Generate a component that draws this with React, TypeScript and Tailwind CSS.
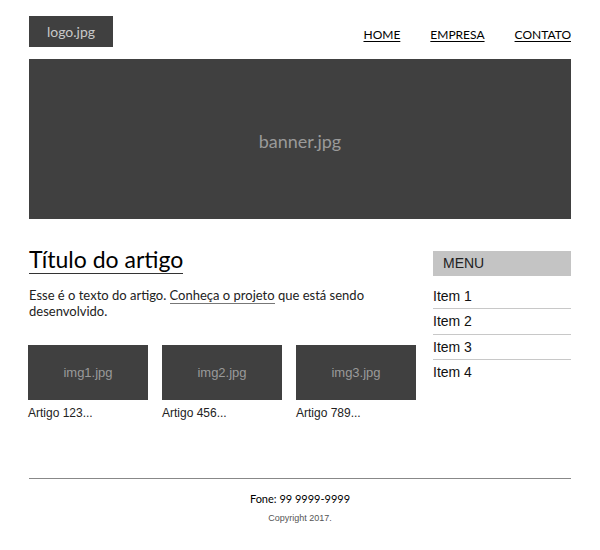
const sans = "font-['Lato','Open_Sans',sans-serif]";
const arial = "font-['Liberation_Sans',Arial,sans-serif]";

function Thumb({ img, label }: { img: string; label: string }) {
  return (
    <div className="w-[120px]">
      <div className={`h-[55px] bg-[#404040] flex items-center justify-center text-[13px] text-[#9a9a9a] ${arial}`}>
        {img}
      </div>
      <p className={`mt-[4px] text-[12px] text-[#222] ${arial}`}>{label}</p>
    </div>
  );
}

export default function App() {
  return (
    <div className="w-[600px] h-[550px] bg-white">
      <div className="w-[542px] ml-[29px] pt-[16px]">
        {/* cabeçalho */}
        <header className="flex items-start justify-between">
          <div className={`w-[84px] h-[31px] bg-[#404040] flex items-center justify-center text-[14px] text-[#c8c8c8] ${sans}`}>
            logo.jpg
          </div>
          <nav className={`flex gap-[30px] pt-[10px] text-[12px] text-black ${sans}`}>
            <a className="underline underline-offset-2">HOME</a>
            <a className="underline underline-offset-2">EMPRESA</a>
            <a className="underline underline-offset-2">CONTATO</a>
          </nav>
        </header>

        <div className={`mt-[12px] h-[160px] bg-[#404040] flex items-center justify-center pt-[5px] text-[18px] text-[#9a9a9a] ${sans}`}>
          banner.jpg
        </div>

        <div className="flex justify-between mt-[25px]">
          <main className="w-[388px]">
            <h1 className={`text-[23px] leading-[28px] text-black inline-block border-b border-[#333] pt-[1px] ${sans}`}>
              Título do artigo
            </h1>
            <p className={`mt-[13px] text-[13px] leading-[16px] text-[#222] ${sans}`}>
              Esse é o texto do artigo. <a className="border-b border-[#777]">Conheça o projeto</a> que está sendo desenvolvido.
            </p>
            <div className="flex gap-[14px] mt-[26px] -ml-[1px]">
              <Thumb img="img1.jpg" label="Artigo 123..." />
              <Thumb img="img2.jpg" label="Artigo 456..." />
              <Thumb img="img3.jpg" label="Artigo 789..." />
            </div>
          </main>

          <aside className={`w-[138px] mt-[7px] ${arial}`}>
            <div className="h-[25px] bg-[#c4c4c4] flex items-center pl-[10px] text-[14px] text-[#222]">MENU</div>
            <ul className="mt-[8px] text-[14px] text-[#111]">
              <li className="h-[25px] flex items-center border-b border-[#c8c8c8]">Item 1</li>
              <li className="h-[26px] flex items-center border-b border-[#c8c8c8]">Item 2</li>
              <li className="h-[25px] flex items-center border-b border-[#c8c8c8]">Item 3</li>
              <li className="h-[25px] flex items-center">Item 4</li>
            </ul>
          </aside>
        </div>

        <footer className="mt-[56px] border-t border-[#888] pt-[12px] text-center">
          <p className={`text-[11px] text-black ${sans}`}>Fone: 99 9999-9999</p>
          <p className={`mt-[4px] text-[9px] text-[#555] ${arial}`}>Copyright 2017.</p>
        </footer>
      </div>
    </div>
  );
}
